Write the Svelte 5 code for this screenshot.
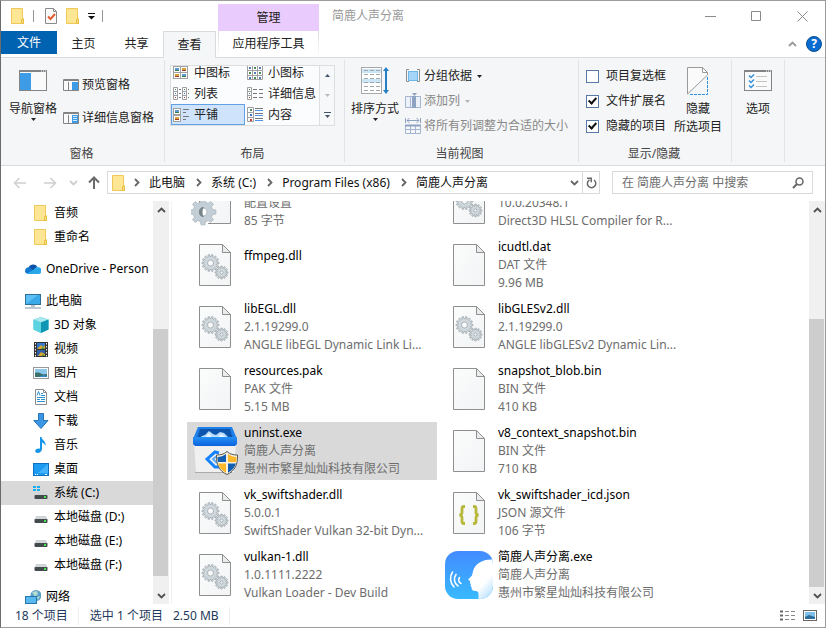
<script lang="ts">
  type Doc = 'dll' | 'blank' | 'ini' | 'json' | 'uninst' | 'app';

  interface FileItem {
    name: string;
    lines: string[];
    icon: Doc;
  }

  const crumbs = ['此电脑', '系统 (C:)', 'Program Files (x86)', '简鹿人声分离'];

  const tree = [
    { label: '音频', icon: 'folder', level: 2 },
    { label: '重命名', icon: 'folder', level: 2 },
    { label: 'OneDrive - Person', icon: 'cloud', level: 1 },
    { label: '此电脑', icon: 'pc', level: 1 },
    { label: '3D 对象', icon: 'cube', level: 2 },
    { label: '视频', icon: 'video', level: 2 },
    { label: '图片', icon: 'picture', level: 2 },
    { label: '文档', icon: 'document', level: 2 },
    { label: '下载', icon: 'download', level: 2 },
    { label: '音乐', icon: 'music', level: 2 },
    { label: '桌面', icon: 'desktop', level: 2 },
    { label: '系统 (C:)', icon: 'system', level: 2 },
    { label: '本地磁盘 (D:)', icon: 'disk', level: 2 },
    { label: '本地磁盘 (E:)', icon: 'disk', level: 2 },
    { label: '本地磁盘 (F:)', icon: 'disk', level: 2 },
    { label: '网络', icon: 'network', level: 1 },
  ];

  const files: FileItem[] = [
    { name: '', lines: ['配置设置', '85 字节'], icon: 'ini' },
    { name: '', lines: ['10.0.20348.1', 'Direct3D HLSL Compiler for R...'], icon: 'dll' },
    { name: 'ffmpeg.dll', lines: [''], icon: 'dll' },
    { name: 'icudtl.dat', lines: ['DAT 文件', '9.96 MB'], icon: 'blank' },
    { name: 'libEGL.dll', lines: ['2.1.19299.0', 'ANGLE libEGL Dynamic Link Li...'], icon: 'dll' },
    { name: 'libGLESv2.dll', lines: ['2.1.19299.0', 'ANGLE libGLESv2 Dynamic Lin...'], icon: 'dll' },
    { name: 'resources.pak', lines: ['PAK 文件', '5.15 MB'], icon: 'blank' },
    { name: 'snapshot_blob.bin', lines: ['BIN 文件', '410 KB'], icon: 'blank' },
    { name: 'uninst.exe', lines: ['简鹿人声分离', '惠州市繁星灿灿科技有限公司'], icon: 'uninst' },
    { name: 'v8_context_snapshot.bin', lines: ['BIN 文件', '710 KB'], icon: 'blank' },
    { name: 'vk_swiftshader.dll', lines: ['5.0.0.1', 'SwiftShader Vulkan 32-bit Dyn...'], icon: 'dll' },
    { name: 'vk_swiftshader_icd.json', lines: ['JSON 源文件', '106 字节'], icon: 'json' },
    { name: 'vulkan-1.dll', lines: ['1.0.1111.2222', 'Vulkan Loader - Dev Build'], icon: 'dll' },
    { name: '简鹿人声分离.exe', lines: ['简鹿人声分离', '惠州市繁星灿灿科技有限公司'], icon: 'app' },
  ];

  const layouts = ['中图标', '小图标', '列表', '详细信息', '平铺', '内容'];

  let layout = $state('平铺');
  let place = $state('系统 (C:)');
  let selected = $state(8);
  let query = $state('');
  let options = $state([
    { label: '项目复选框', on: false },
    { label: '文件扩展名', on: true },
    { label: '隐藏的项目', on: true },
  ]);

  // cog outline with a round hole, drawn with the even-odd rule
  function gear(cx: number, cy: number, inner: number, outer: number, hole: number, teeth: number) {
    const step = (Math.PI * 2) / teeth;
    const pts: string[] = [];
    for (let i = 0; i < teeth; i++) {
      for (const [f, r] of [[-0.3, inner], [-0.2, outer], [0.2, outer], [0.3, inner]]) {
        const a = (i + f) * step;
        pts.push(`${(cx + r * Math.cos(a)).toFixed(2)},${(cy + r * Math.sin(a)).toFixed(2)}`);
      }
    }
    return `M${pts.join('L')}ZM${cx - hole},${cy}a${hole},${hole} 0 1 0 ${hole * 2},0a${hole},${hole} 0 1 0 ${-hole * 2},0Z`;
  }
</script>

{#snippet folder()}
  <svg width="16" height="16" viewBox="0 0 16 16">
    <path d="M1.500 .5h11v10h1v5h-12z" fill="#ffe694" stroke="#efc857" />
    <path d="M11.500 15.500v-4h2v4z" fill="#ffe08a" stroke="#e9bd40" />
  </svg>
{/snippet}

{#snippet chevron(dir: string, color: string)}
  <svg class={dir} width="9" height="9" viewBox="0 0 9 9"><path d="M1 3l3.500 3.500L8 3" fill="none" stroke={color} stroke-width="1.800" /></svg>
{/snippet}

{#snippet drop(color: string)}
  <svg width="5" height="3" viewBox="0 0 5 3"><path d="M0 0h5L2.500 3z" fill={color} /></svg>
{/snippet}

{#snippet miniPic(x: number, y: number, warm: boolean)}
  <rect x={x + 0.5} y={y + 0.5} width="7" height="6" fill="#fff" stroke="#a0a0a0" />
  <rect x={x + 2} y={y + 2} width="4" height="3" fill={warm ? '#d7a03a' : '#5b9ad2'} />
  <rect x={x + 2} y={y + 4} width="4" height="1" fill={warm ? '#a33c22' : '#3c7a4a'} />
{/snippet}

{#snippet layoutIcon(kind: string)}
  <svg width="16" height="16" viewBox="0 0 16 16">
    {#if kind === '中图标'}
      {@render miniPic(0, 1, false)}{@render miniPic(7, 1, true)}{@render miniPic(0, 7, true)}{@render miniPic(7, 7, false)}
    {:else if kind === '小图标'}
      <path d="M.5 .5h15v14H.5zM5.500 .5v14M10.500 .5v14M.5 5.500h15M.5 10.500h15" fill="#fff" stroke="#a0a0a0" />
      {#each [2, 7, 12] as x}{#each [2, 7, 12] as y}<rect {x} {y} width="2" height="2" fill={(x + y) % 2 ? '#4b8a5b' : '#5278b8'} />{/each}{/each}
    {:else if kind === '列表'}
      {#each [0, 9] as x}
        <path d="M{x + 0.5} 1.500h4v12h-4zM{x + 0.5} 5.500h4M{x + 0.5} 9.500h4" fill="#fff" stroke="#a0a0a0" />
        <path d="M{x + 6} 3.500h2M{x + 6} 7.500h2M{x + 6} 11.500h2" stroke="#777" />
        <path d="M{x + 2} 3.500h1" stroke="#2f855a" /><path d="M{x + 2} 7.500h1" stroke="#3b6fc4" /><path d="M{x + 2} 11.500h1" stroke="#c43b3b" />
      {/each}
    {:else if kind === '详细信息'}
      <path d="M.5 1.500h4v12h-4zM.5 5.500h4M.5 9.500h4" fill="#fff" stroke="#a0a0a0" />
      <path d="M2 3.500h1" stroke="#2f855a" /><path d="M2 7.500h1" stroke="#3b6fc4" /><path d="M2 11.500h1" stroke="#c43b3b" />
      <path d="M6 3.500h4M12 3.500h4M6 7.500h4M12 7.500h4M6 11.500h4M12 11.500h4" stroke="#777" />
    {:else if kind === '平铺'}
      {@render miniPic(0, 1, false)}{@render miniPic(0, 8, true)}
      <path d="M10 2.500h6M10 5.500h3M10 9.500h6M10 12.500h3" stroke="#777" />
    {:else}
      <path d="M.5 .5h6v14h-6zM.5 5.500h6M.5 10.500h6" fill="#fff" stroke="#a0a0a0" />
      <path d="M3 3h2" stroke="#4b8a5b" stroke-width="2" /><path d="M3 8h2" stroke="#3b6fc4" stroke-width="2" /><path d="M3 13h2" stroke="#c43b3b" stroke-width="2" />
      <path d="M8 1.500h8M8 6.500h8M8 11.500h8" stroke="#777" /><path d="M8 3.500h8M8 8.500h8M8 13.500h8" stroke="#4f94f0" />
    {/if}
  </svg>
{/snippet}

{#snippet treeIcon(kind: string)}
  {#if kind === 'folder'}
    {@render folder()}
  {:else}
    <svg width="16" height="16" viewBox="0 0 16 16">
      {#if kind === 'cloud'}
        <path d="M3.500 7a4.800 4.800 0 0 1 8.800-1.200L9 10z" fill="#0a52a8" />
        <path d="M0 10a3.600 3.600 0 0 1 5.500-3.200l6 6H3A3 3 0 0 1 0 10z" fill="#1278d0" />
        <path d="M7.500 9.500l3-2.800a4 4 0 0 1 2.700-.4A3.300 3.300 0 0 1 13 13H3.300a3 3 0 0 1-1.500-.4z" fill="#28a8ea" />
      {:else if kind === 'pc'}
        <rect x=".5" y="1.500" width="15" height="10" fill="#5cc0f5" stroke="#2f6f96" />
        <path d="M1 11L13 2h2v9z" fill="#3aa9ea" />
        <path d="M6 12h4v2H6z" fill="#b8c4cc" /><path d="M0 15h16" stroke="#7c93a5" />
      {:else if kind === 'cube'}
        <path d="M8 0l7.500 2.500v10L8 16 .5 12.500v-10z" fill="#38c3d8" />
        <path d="M8 0l7.500 2.500L8 5.500.5 2.500z" fill="#a9e8ee" />
        <path d="M8 5.500l7.500-3v10L8 16z" fill="#1195b4" /><path d="M.5 2.500L8 5.500V16l-7.500-3.500z" fill="#5bd3e0" />
      {:else if kind === 'video'}
        <rect x="1" y="1" width="14" height="15" fill="#333" />
        <path d="M2.500 2v14M13.500 2v14" stroke="#eee" stroke-width="1" stroke-dasharray="1.500 1.500" />
        <rect x="4" y="2" width="8" height="6" fill="#3479cc" /><rect x="4" y="9" width="8" height="6" fill="#315fa8" />
        <path d="M4 8l4-4 2 2 2-2v4zM5 15l3-4 4 2v2z" fill="#d9a52c" /><path d="M8 8l2-2 2 2zM9 15l1-2 2 2z" fill="#3a9b40" />
      {:else if kind === 'picture'}
        <rect x=".5" y="2.500" width="15" height="11" fill="#fff" stroke="#999" />
        <rect x="2" y="4" width="12" height="8" fill="#8cc8ea" />
        <path d="M2 8c3-1 5 0 7 1s4 0 5 0v3H2z" fill="#3a6f6a" /><path d="M6 12c3-2 5-2 8-1v1z" fill="#3589c9" />
      {:else if kind === 'document'}
        <path d="M2.500 .5h8l3 3v12h-11z" fill="#fff" stroke="#8c8c8c" /><path d="M10.500 .5v3h3" fill="none" stroke="#8c8c8c" />
        <path d="M4 6.500l1.500-4L7 6.500M8 4.500h2M8 6.500h4M4 8.500h8M4 10.500h3M8 10.500h4M4 12.500h8" fill="none" stroke="#2f8fcf" />
      {:else if kind === 'download'}
        <path d="M5.500 .5h5v7h4.500L8 15.500.8 7.500h4.700z" fill="#3b96e3" stroke="#2474b8" />
      {:else if kind === 'music'}
        <path d="M7 0h1.500c0 3 5 4 4 9-.5-2-2-3-3.500-3.500V12c0 2-2 4-4.500 4C2 16 1.500 13 3.500 12c1-.6 2.500-.8 3.500-.3z" fill="#1595ea" />
      {:else if kind === 'desktop'}
        <rect x=".5" y="2.500" width="15" height="12" fill="#1c9bf2" stroke="#0c6fc0" />
        <path d="M5 12L15 3v9z" fill="#42b2fa" /><path d="M2 13.500h1M4 13.500h1M12 13.500h2" stroke="#fff" />
      {:else if kind === 'network'}
        <circle cx="11" cy="6.500" r="5.500" fill="#5c9fc8" /><path d="M7 3l5-1 1 3-3 3zM12 8l3-1-2 4z" fill="#b5dcd0" />
        <rect x=".5" y="7.500" width="11" height="7" fill="#58b9f0" stroke="#2676ad" />
      {:else}
        {#if kind === 'system'}
          <path d="M0 1h3v2H0zM4 1h3v2H4zM0 4h3v2H0zM4 4h3v2H4z" fill="#17aef0" />
        {/if}
        <path d="M3 7h10l2 4H1.500z" fill="#d2d5d7" /><rect x="1.500" y="10" width="13" height="4" rx="1" fill="#444b4c" /><rect x="11" y="11" width="2" height="2" fill="#45e052" />
      {/if}
    </svg>
  {/if}
{/snippet}

{#snippet fileIcon(kind: Doc)}
  <svg width="48" height="48" viewBox="0 0 48 48">
    {#if kind === 'uninst'}
      <defs>
        <linearGradient id="bin" x2="0" y2="1"><stop stop-color="#2491f7" /><stop offset="1" stop-color="#0c63dc" /></linearGradient>
      </defs>
      <path d="M7 0h34l5 12H2z" fill="#1d7fe8" /><path d="M9 2h30l3 10H6z" fill="#0d54ad" />
      <path d="M8 12l3-3 3-1 4-4 4 3 3 1 4-3 4 1 3 3 3 3z" fill="#b9dcfb" /><path d="M13 12l5-6 4 6zM26 12l4-5 7 5z" fill="#e9f5ff" />
      <path d="M3 16h42l-2 29H5z" fill="#f0f0f1" /><path d="M2 10h44v7l-2 2H4l-2-2z" fill="url(#bin)" />
      <path d="M4 45.500h37" stroke="#aaa" />
      <path d="M28 26l-4-1-8 7 8 8h5" fill="none" stroke="#1683ff" stroke-width="3" /><path d="M26 29l-4 3 4 4" fill="none" stroke="#5aaaff" stroke-width="2" />
      <path d="M36 24.500c3 3 7 3.500 10.500 3.500C47 37 44 44 36 47.500 28 44 25 37 25.500 28c3.500 0 7.500-.5 10.500-3.500z" fill="#f6f0dc" stroke="#595959" />
      <path d="M35 27v8h-8c-.4-2-.5-3-.5-5 3 0 6-1 8.500-3zM37 36.500h8c-1.300 4-4 7.300-8 9.300z" fill="#125fb4" />
      <path d="M37 27v8h8.200c.3-2 .3-3 .3-5-3 0-6-1-8.500-3zM35 36.500h-8c1.300 4 4 7.300 8 9.300z" fill="#fdb829" />
    {:else if kind === 'app'}
      <defs>
        <linearGradient id="sky" x2="0" y2="1"><stop stop-color="#438bff" /><stop offset="1" stop-color="#38baff" /></linearGradient>
        <linearGradient id="face" x1=".3" x2="1" y2="1"><stop offset=".55" stop-color="#fff" /><stop offset="1" stop-color="#a4d9ff" /></linearGradient>
        <clipPath id="badge"><rect width="48" height="48" rx="13" /></clipPath>
      </defs>
      <g clip-path="url(#badge)">
        <rect width="48" height="48" fill="url(#sky)" />
        <path d="M48 8.500c-9-.5-16 3-19 9-1.200 2.500-1.500 5-2 7L23.500 28c-.5 1 .2 1.500 1.500 2v2l1 1.500-.5 1.500 1 1c0 3 1.500 4 4 4 2 0 3 1 3 3v5h15z" fill="url(#face)" />
      </g>
      <path d="M15.500 26.500a4 4 0 0 0 1.500 6M12 23.500a8 8 0 0 0 2 11.500M8.500 21a12 12 0 0 0 1.500 15" fill="none" stroke="#fff" stroke-width="1.600" stroke-linecap="round" transform="translate(-1 0)" />
    {:else}
      <defs>
        <linearGradient id="paper" x2="1" y2="1"><stop stop-color="#fbfcfc" /><stop offset="1" stop-color="#f2f4f5" /></linearGradient>
      </defs>
      <path d="M8.500 3.500h23l8 8v33h-31z" fill="url(#paper)" stroke="#8f8f8f" />
      <path d="M31.500 3.500v8h8z" fill="#e9ebec" stroke="#8f8f8f" />
      {#if kind === 'dll'}
        <path d={gear(19.500, 22, 6.500, 8.500, 3, 14)} fill="#cfd8dd" stroke="#98a1a6" stroke-width=".7" fill-rule="evenodd" />
        <path d={gear(30.500, 31.500, 4.500, 6.500, 1.500, 12)} fill="#cfd8dd" stroke="#98a1a6" stroke-width=".7" fill-rule="evenodd" />
      {:else if kind === 'ini'}
        <path d="M4 26h18v19H4z" fill="#fff" />
        <path d="M22 44.500h-5" stroke="#8f8f8f" />
        <path d={gear(12, 33, 10, 13, 4, 8)} fill="#c3ced6" stroke="#aab6be" stroke-width=".8" fill-rule="evenodd" />
        <path d="M13 28c-3 0-5 2-5 5s2 5 5 5c-2-2-2-8 0-10z" fill="#77838b" />
      {:else if kind === 'json'}
        <path d="M20 17.500h-1q-2 0-2 2v4q0 2-2.500 2.500 2.500 .5 2.500 2.500v4q0 2 2 2h1M28 17.500h1q2 0 2 2v4q0 2 2.500 2.500-2.500 .5-2.500 2.500v4q0 2-2 2h-1" fill="none" stroke="#b7b73b" stroke-width="2.800" />
      {/if}
    {/if}
  </svg>
{/snippet}

{#snippet scrollbar(thumb: string)}
  <div class="scrollbar {thumb}">
    {@render chevron('up', '#505050')}
    <div class="track"><div class="thumb"></div></div>
    {@render chevron('down', '#505050')}
  </div>
{/snippet}

<div class="window">
  <header class="title-bar">
    <div class="quick">
      {@render folder()}
      <i class="bar"></i>
      <button aria-label="属性">
        <svg width="14" height="17" viewBox="0 0 14 17"><path d="M1.500 .5h8l3 3v12h-11z" fill="#fbfbfb" stroke="#8a8a8a" /><path d="M9.500 .5v3h3" fill="none" stroke="#8a8a8a" /><path d="M4 8.500l2.500 2.500L11 6" fill="none" stroke="#e35b2d" stroke-width="2" /></svg>
      </button>
      <button aria-label="新建文件夹">{@render folder()}</button>
      <button aria-label="自定义快速访问工具栏">
        <svg width="7" height="7" viewBox="0 0 7 7"><path d="M0 .5h7" stroke="#111" /><path d="M0 3h7L3.500 6.500z" fill="#111" /></svg>
      </button>
      <i class="bar"></i>
    </div>
    <div class="context">管理</div>
    <h1>简鹿人声分离</h1>
    <div class="controls">
      <button aria-label="最小化"><svg width="11" height="11" viewBox="0 0 11 11"><path d="M0 5.500h11" stroke="#8b8b8b" /></svg></button>
      <button aria-label="最大化"><svg width="11" height="11" viewBox="0 0 11 11"><path d="M.5 .5h9v9h-9z" fill="none" stroke="#8b8b8b" /></svg></button>
      <button aria-label="关闭"><svg width="11" height="11" viewBox="0 0 11 11"><path d="M.5 .5l10 10M10.500 .5l-10 10" stroke="#8b8b8b" /></svg></button>
    </div>
  </header>

  <nav class="tabs">
    <button class="file">文件</button>
    <button>主页</button>
    <button>共享</button>
    <button class="active">查看</button>
    <button class="tools">应用程序工具</button>
    <div class="help">
      <button aria-label="最小化功能区">{@render chevron('up', '#999')}</button>
      <button aria-label="帮助" class="round">?</button>
    </div>
  </nav>

  <section class="ribbon">
    <div class="group panes">
      <div class="body">
        <button class="big">
          <span class="pic"><svg width="28" height="21" viewBox="0 0 28 21"><rect x=".5" y=".5" width="27" height="20" fill="#fafafa" stroke="#848484" /><path d="M1 1.500h26" stroke="#848484" /><path d="M22 1h1M24 1h1M26 1h1" stroke="#fff" /><rect x="1" y="3" width="11" height="17" fill="#3e9be5" /></svg></span>
          <span>导航窗格</span>
          {@render drop('#222')}
        </button>
        <div class="stack wide">
          <button><svg width="16" height="12" viewBox="0 0 16 12"><path d="M.5 .5h15v11H.5zM5.500 3v8" fill="#fafafa" stroke="#848484" /><path d="M0 1.500h16" stroke="#848484" /><rect x="9" y="3" width="6" height="8" fill="#3e9be5" /></svg>预览窗格</button>
          <button><svg width="16" height="12" viewBox="0 0 16 12"><path d="M.5 .5h15v11H.5zM5.500 3v8" fill="#fafafa" stroke="#848484" /><path d="M0 1.500h16" stroke="#848484" /><rect x="9" y="3" width="6" height="8" fill="#3e9be5" /><path d="M10 4.500h4M10 6.500h4M10 8.500h4" stroke="#d4eafb" /></svg>详细信息窗格</button>
        </div>
      </div>
      <div class="caption">窗格</div>
    </div>

    <div class="group layout">
      <div class="body">
        <div class="gallery">
          <div class="items">
            {#each layouts as name}
              <button class:on={layout === name} onclick={() => (layout = name)}>{@render layoutIcon(name)}{name}</button>
            {/each}
          </div>
          <div class="spin">
            <button aria-label="上一行"><svg width="5" height="3" viewBox="0 0 5 3"><path d="M0 3h5L2.500 0z" fill="#44546a" /></svg></button>
            <button aria-label="下一行">{@render drop('#b4bac2')}</button>
            <button aria-label="更多"><svg width="7" height="7" viewBox="0 0 7 7"><path d="M0 .5h7" stroke="#44546a" /><path d="M1 3h5L3.500 6z" fill="#44546a" /></svg></button>
          </div>
        </div>
      </div>
      <div class="caption">布局</div>
    </div>

    <div class="group view">
      <div class="body">
        <button class="big">
          <span class="pic"><svg width="30" height="28" viewBox="0 0 30 28"><rect x="1.500" y=".5" width="20" height="26" fill="#fff" stroke="#a8a8a8" /><path d="M2 4h19M2 14h19" stroke="#cbe6f7" stroke-width="4" /><path d="M4 3.500h16M4 7.500h16M4 11.500h16M4 15.500h16M4 19.500h16M4 23.500h16" stroke="#a3a8ab" stroke-dasharray="4 2" /><path d="M26 2v23" stroke="#2680c4" stroke-width="2" /><path d="M23 4l3-4 3 4zM23 23l3 4 3-4z" fill="#2680c4" /></svg></span>
          <span>排序方式</span>
          {@render drop('#222')}
        </button>
        <div class="stack">
          <button><svg width="16" height="16" viewBox="0 0 16 16"><path d="M4 1.500H1.500v12H4M12 1.500h2.500v12H12" fill="none" stroke="#8d8d8d" /><rect x="3.500" y="3.500" width="9" height="9" fill="#a5d6fa" stroke="#6fb6e8" /></svg>分组依据 {@render drop('#222')}</button>
          <button class="off" disabled><svg width="16" height="16" viewBox="0 0 16 16"><path d="M.5 3.500h15v11H.5zM5.500 3v12M10.500 3v12" fill="#eef2f8" stroke="#a4b5cf" /><path d="M7 3h4v12H7z" fill="#8ea2c2" /><path d="M7 0h5L9.500 3z" fill="#8ea2c2" /></svg>添加列 {@render drop('#b4b4b4')}</button>
          <button class="off" disabled><svg width="16" height="16" viewBox="0 0 16 16"><path d="M.5 0v5M15.500 0v5M2 2.500h12M4.500 0L2 2.500 4.500 5M11.500 0L14 2.500 11.500 5" fill="none" stroke="#8ea2c2" /><path d="M.5 7.500h15v8H.5zM5.500 7v8M10.500 7v8M0 11.500h16" fill="none" stroke="#a4b5cf" /><path d="M0 7.500h16" stroke="#8ea2c2" stroke-width="2" /></svg>将所有列调整为合适的大小</button>
        </div>
      </div>
      <div class="caption">当前视图</div>
    </div>

    <div class="group show">
      <div class="body">
        <div class="stack">
          {#each options as opt}
            <label><input type="checkbox" bind:checked={opt.on} />{opt.label}</label>
          {/each}
        </div>
        <button class="big">
          <span class="pic"><svg width="22" height="28" viewBox="0 0 22 28"><path d="M.5 27V.5h15l5 5v3z" fill="#fafafa" /><path d="M.5 27V.5h15l5 5v2.500L.5 27M15.500 .5v5h5" fill="none" stroke="#9a9a9a" /><path d="M20.500 10v17.500H2" fill="none" stroke="#2f8fe0" stroke-dasharray="3 1" /></svg></span>
          <span>隐藏</span>
          <span>所选项目</span>
        </button>
      </div>
      <div class="caption">显示/隐藏</div>
    </div>

    <div class="group opts">
      <div class="body">
        <button class="big">
          <span class="pic"><svg width="28" height="21" viewBox="0 0 28 21"><rect x=".5" y=".5" width="27" height="20" fill="#fafafa" stroke="#848484" /><path d="M1 1.500h26" stroke="#848484" /><path d="M22 1h1M24 1h1M26 1h1" stroke="#fff" /><path d="M5 5.500l2 2 3-3M5 10.500l2 2 3-3M5 15.500l2 2 3-3" fill="none" stroke="#3590d8" stroke-width="1.500" /><path d="M12 6.500h11M12 11.500h11M12 16.500h11" stroke="#c3c3c3" /></svg></span>
          <span>选项</span>
        </button>
      </div>
    </div>
  </section>

  <div class="address-row">
    <div class="moves">
      <button aria-label="后退"><svg width="14" height="12" viewBox="0 0 14 12"><path d="M13 6H2M6.500 1L1.500 6l5 5" fill="none" stroke="#d0d0d0" stroke-width="1.500" /></svg></button>
      <button aria-label="前进"><svg width="14" height="12" viewBox="0 0 14 12"><path d="M1 6h11M7.500 1l5 5-5 5" fill="none" stroke="#d0d0d0" stroke-width="1.500" /></svg></button>
      <button aria-label="最近浏览的位置" class="recent">{@render chevron('down', '#cfcfcf')}</button>
      <button aria-label="上移"><svg width="12" height="13" viewBox="0 0 12 13"><path d="M6 13V2M1 6.500l5-5 5 5" fill="none" stroke="#6b6b6b" stroke-width="2" /></svg></button>
    </div>
    <div class="address">
      {@render folder()}
      <ol>
        {#each crumbs as crumb}
          <li>{@render chevron('right', '#666')}<a href="#top">{crumb}</a></li>
        {/each}
      </ol>
      <button aria-label="以前的位置">{@render chevron('down', '#666')}</button>
      <button aria-label="刷新" class="refresh"><svg width="11" height="12" viewBox="0 0 11 12"><path d="M8 3A4.200 4.200 0 1 1 3.500 2.800" fill="none" stroke="#666" stroke-width="1.500" /><path d="M1 1.200h4.200v4" fill="none" stroke="#666" stroke-width="1.500" /></svg></button>
    </div>
    <label class="search">
      <input type="text" bind:value={query} placeholder="在 简鹿人声分离 中搜索" aria-label="搜索" />
      <svg width="12" height="12" viewBox="0 0 12 12"><circle cx="7.500" cy="4.500" r="3.500" fill="none" stroke="#666" stroke-width="1.500" /><path d="M5 7L1 11" stroke="#666" stroke-width="2" /></svg>
    </label>
  </div>

  <main>
    <div class="tree">
      <ul>
        {#each tree as node}
          <li class="level{node.level}">
            <button class:current={place === node.label} onclick={() => (place = node.label)}>{@render treeIcon(node.icon)}{node.label}</button>
          </li>
        {/each}
      </ul>
    </div>
    {@render scrollbar('places')}
    <div class="files">
      <div class="tiles">
        {#each files as file, i}
          <button class="tile" class:selected={selected === i} onclick={() => (selected = i)}>
            {@render fileIcon(file.icon)}
            <span class="info">
              <span class="name">{file.name}</span>
              {#each file.lines as line}<span>{line}</span>{/each}
            </span>
          </button>
        {/each}
      </div>
    </div>
    {@render scrollbar('listing')}
  </main>

  <footer>
    <span class="count">18 个项目</span>
    <span class="picked"><span>选中 1 个项目</span><span>2.50 MB</span></span>
    <div class="modes">
      <button aria-label="详细信息"><svg width="16" height="12" viewBox="0 0 16 12"><path d="M0 1.500h3M0 5.500h3M0 9.500h3" stroke="#666" stroke-width="2" /><path d="M5 1.500h4M11 1.500h4M5 5.500h4M11 5.500h4M5 9.500h4M11 9.500h4" stroke="#888" /></svg></button>
      <button aria-label="大缩略图"><svg width="16" height="12" viewBox="0 0 16 12"><rect x="1.500" y=".5" width="13" height="10" fill="#fff" stroke="#666" /><rect x="3" y="2" width="10" height="7" fill="#7fc0ea" /><path d="M3 7l4-2 6 2v2H3z" fill="#2e6c9c" /></svg></button>
    </div>
  </footer>
</div>

<style>
  :global(body) {
    font: 12px/18px 'Noto Sans', 'Noto Sans CJK SC', sans-serif;
    color: #222;
    background: #fff;
  }

  .window {
    box-sizing: border-box;
    height: 100vh;
    display: flex;
    flex-direction: column;
    overflow: hidden;
    border: 1px solid #9c9c9c;
    border-left-color: #6b6b6b;
    background: #fff;
  }

  button {
    display: flex;
    align-items: center;
    justify-content: center;
    padding: 0;
    border: 0;
    background: none;
    color: inherit;
    font: inherit;
    white-space: nowrap;
  }

  svg {
    display: block;
    flex-shrink: 0;
  }

  ul,
  ol {
    list-style: none;
    margin: 0;
    padding: 0;
  }

  .up {
    transform: rotate(180deg);
  }

  .right {
    transform: rotate(-90deg);
  }

  .title-bar {
    display: flex;
    flex-shrink: 0;
    height: 30px;
  }

  .quick {
    box-sizing: border-box;
    width: 217px;
    display: flex;
    align-items: center;
    gap: 7px;
    padding-left: 9px;
  }

  .bar {
    width: 1px;
    height: 12px;
    background: #999;
  }

  .quick .bar:first-of-type {
    margin-right: 3px;
  }

  .context {
    width: 101px;
    margin-top: 3px;
    background: #e9cbfd;
    text-align: center;
    line-height: 27px;
  }

  h1 {
    flex: 1;
    margin: 0 0 0 13px;
    font-size: 12px;
    font-weight: normal;
    line-height: 29px;
    color: #999;
  }

  .controls {
    display: flex;
  }

  .controls button {
    width: 46px;
  }

  .tabs {
    display: flex;
    flex-shrink: 0;
    height: 26px;
  }

  .tabs > button {
    width: 53px;
  }

  .tabs .file {
    width: 56px;
    height: 23px;
    background: #0063b1;
    color: #fff;
  }

  .tabs .active {
    z-index: 1;
    margin-bottom: -1px;
    border: 1px solid #dadbdc;
    border-bottom: 0;
    background: #f5f6f7;
  }

  .tabs .tools {
    width: 101px;
    margin-left: 2px;
    border: solid;
    border-width: 0 1px;
    border-image: linear-gradient(#dadbdc, #fff) 1;
  }

  .help {
    display: flex;
    align-items: center;
    gap: 9px;
    margin-left: auto;
    padding-right: 3px;
  }

  .round {
    width: 16px;
    height: 16px;
    border: 1px solid #074f91;
    border-radius: 50%;
    background: #0a6cd0;
    color: #fff;
    font-weight: bold;
  }

  .ribbon {
    display: flex;
    flex-shrink: 0;
    border: solid #dadbdc;
    border-width: 1px 0;
    background: #f5f6f7;
  }

  .group {
    display: flex;
    flex-direction: column;
    height: 107px;
    background: linear-gradient(#e2e3e4, #e2e3e4) right 2px / 1px 102px no-repeat;
  }

  .body {
    display: flex;
    align-items: flex-start;
    height: 87px;
  }

  .caption {
    text-align: center;
    color: #444;
  }

  .panes {
    padding: 0 11px 0 8px;
  }

  .layout {
    padding: 0 10px 0 5px;
  }

  .view {
    padding: 0 11px 0 6px;
  }

  .show {
    padding: 0 10px 0 7px;
  }

  .opts {
    padding: 0 13px 0 12px;
  }

  .panes .body,
  .view .body {
    gap: 6px;
  }

  .show .body {
    gap: 8px;
  }

  .big {
    flex-direction: column;
    padding-top: 6px;
  }

  .pic {
    display: flex;
    align-items: center;
    height: 33px;
    margin-bottom: 3px;
  }

  .stack {
    display: flex;
    flex-direction: column;
    align-items: flex-start;
    gap: 7px;
    padding-top: 9px;
  }

  .stack.wide {
    gap: 15px;
    padding-top: 18px;
  }

  .stack button {
    gap: 3px;
    height: 18px;
  }

  .stack button svg:last-child:not(:first-child) {
    margin-left: 2px;
  }

  .off {
    color: #888;
  }

  .stack label {
    display: flex;
    align-items: center;
    gap: 7px;
    white-space: nowrap;
  }

  input[type='checkbox'] {
    appearance: none;
    box-sizing: border-box;
    display: grid;
    justify-content: center;
    width: 13px;
    height: 13px;
    margin: 0;
    border: 1px solid #5878a8;
    background: #fff;
  }

  input[type='checkbox']:checked::after {
    content: '';
    width: 3px;
    height: 6px;
    border: solid #111;
    border-width: 0 2px 2px 0;
    transform: rotate(42deg);
  }

  .gallery {
    box-sizing: border-box;
    display: flex;
    height: 61px;
    margin-top: 7px;
    border: 1px solid #dcdee0;
    background: #fbfcfd;
    overflow: hidden;
  }

  .items {
    display: grid;
    grid-template: repeat(3, 21px) / 74px 74px;
    margin-top: -4px;
  }

  .items button {
    justify-content: flex-start;
    gap: 5px;
    border: 1px solid transparent;
    padding-left: 1px;
  }

  .items .on {
    border-color: #62a2e4;
    background: #cfe4fc;
  }

  .spin {
    display: grid;
    grid-template-rows: 1fr 1fr 1fr;
    width: 14px;
    border-left: 1px solid #dcdee0;
    background: #f7f8f9;
  }

  .address-row {
    display: flex;
    align-items: flex-start;
    flex-shrink: 0;
    gap: 12px;
    height: 30px;
    padding: 5px 12px 0 0;
  }

  .moves {
    display: flex;
    gap: 16px;
    width: 94px;
    height: 23px;
    padding-left: 12px;
    margin-right: -12px;
  }

  .recent {
    margin: 0 -6px 0 -4px;
  }

  .address {
    flex: 1;
    min-width: 0;
    display: flex;
    align-items: center;
    height: 21px;
    padding-left: 3px;
    border: 1px solid #d9d9d9;
  }

  .address ol {
    flex: 1;
    min-width: 0;
    display: flex;
    gap: 9px;
    padding-left: 5px;
    overflow: hidden;
  }

  .address li {
    display: flex;
    align-items: center;
    gap: 8px;
    white-space: nowrap;
  }

  .address a {
    color: #111;
    text-decoration: none;
  }

  .address button {
    width: 16px;
    height: 21px;
  }

  .address .refresh {
    border-left: 1px solid #d9d9d9;
    width: 17px;
  }

  .search {
    box-sizing: border-box;
    display: flex;
    align-items: center;
    width: 201px;
    height: 23px;
    padding: 0 8px 0 9px;
    border: 1px solid #d9d9d9;
  }

  .search input {
    flex: 1;
    min-width: 0;
    padding: 0;
    border: 0;
    outline: 0;
    background: none;
    color: #111;
    font: inherit;
  }

  .search input::placeholder {
    color: #6d6d6d;
  }

  main {
    display: flex;
    flex: 1;
    min-height: 0;
  }

  .tree {
    width: 152px;
    flex-shrink: 0;
    overflow: hidden;
  }

  .tree button {
    justify-content: flex-start;
    gap: 5px;
    width: 100%;
    height: 24px;
    padding-left: 32px;
    color: #000;
  }

  .tree .current {
    background: #d9d9d9;
  }

  .level1 {
    margin-top: 8px;
  }

  .tree .level1 button {
    padding-left: 24px;
  }

  .scrollbar {
    display: flex;
    flex-direction: column;
    align-items: center;
    flex-shrink: 0;
    width: 16px;
    padding: 5px 0 4px;
    background: #f0f0f0;
  }

  .track {
    display: flex;
    flex-direction: column;
    flex: 1;
    width: 100%;
    margin: 3px 0 4px;
  }

  .track::before {
    content: '';
    flex: 111;
  }

  .thumb {
    flex: 247;
    margin-right: 1px;
    background: #cdcdcd;
  }

  .places .track::after {
    content: '';
    flex: 11;
  }

  .listing .track::before {
    flex: 101;
  }

  .listing .thumb {
    flex: 268;
  }

  .files {
    flex: 1;
    min-width: 0;
    margin-left: 2px;
    padding-left: 15px;
    border-left: 1px solid #f2f2f2;
    overflow: hidden;
  }

  .tiles {
    display: grid;
    grid-template-columns: repeat(auto-fill, 250px);
    grid-auto-rows: 58px;
    gap: 4px;
    margin-top: -27px;
  }

  .tile {
    justify-content: flex-start;
    gap: 5px;
    padding-left: 4px;
    text-align: left;
  }

  .tile.selected {
    background: #d9d9d9;
  }

  .info {
    color: #6d6d6d;
  }

  .info span {
    display: block;
    height: 18px;
  }

  .info .name {
    color: #000;
  }

  footer {
    display: flex;
    align-items: center;
    flex-shrink: 0;
    height: 23px;
    padding: 0 7px 0 14px;
    color: #1e395b;
  }

  footer > span {
    padding-right: 10px;
    border-right: 1px solid #eee;
  }

  .picked {
    display: flex;
    gap: 10px;
    padding-left: 11px;
  }

  .modes {
    display: flex;
    gap: 6px;
    margin-left: auto;
  }
</style>
